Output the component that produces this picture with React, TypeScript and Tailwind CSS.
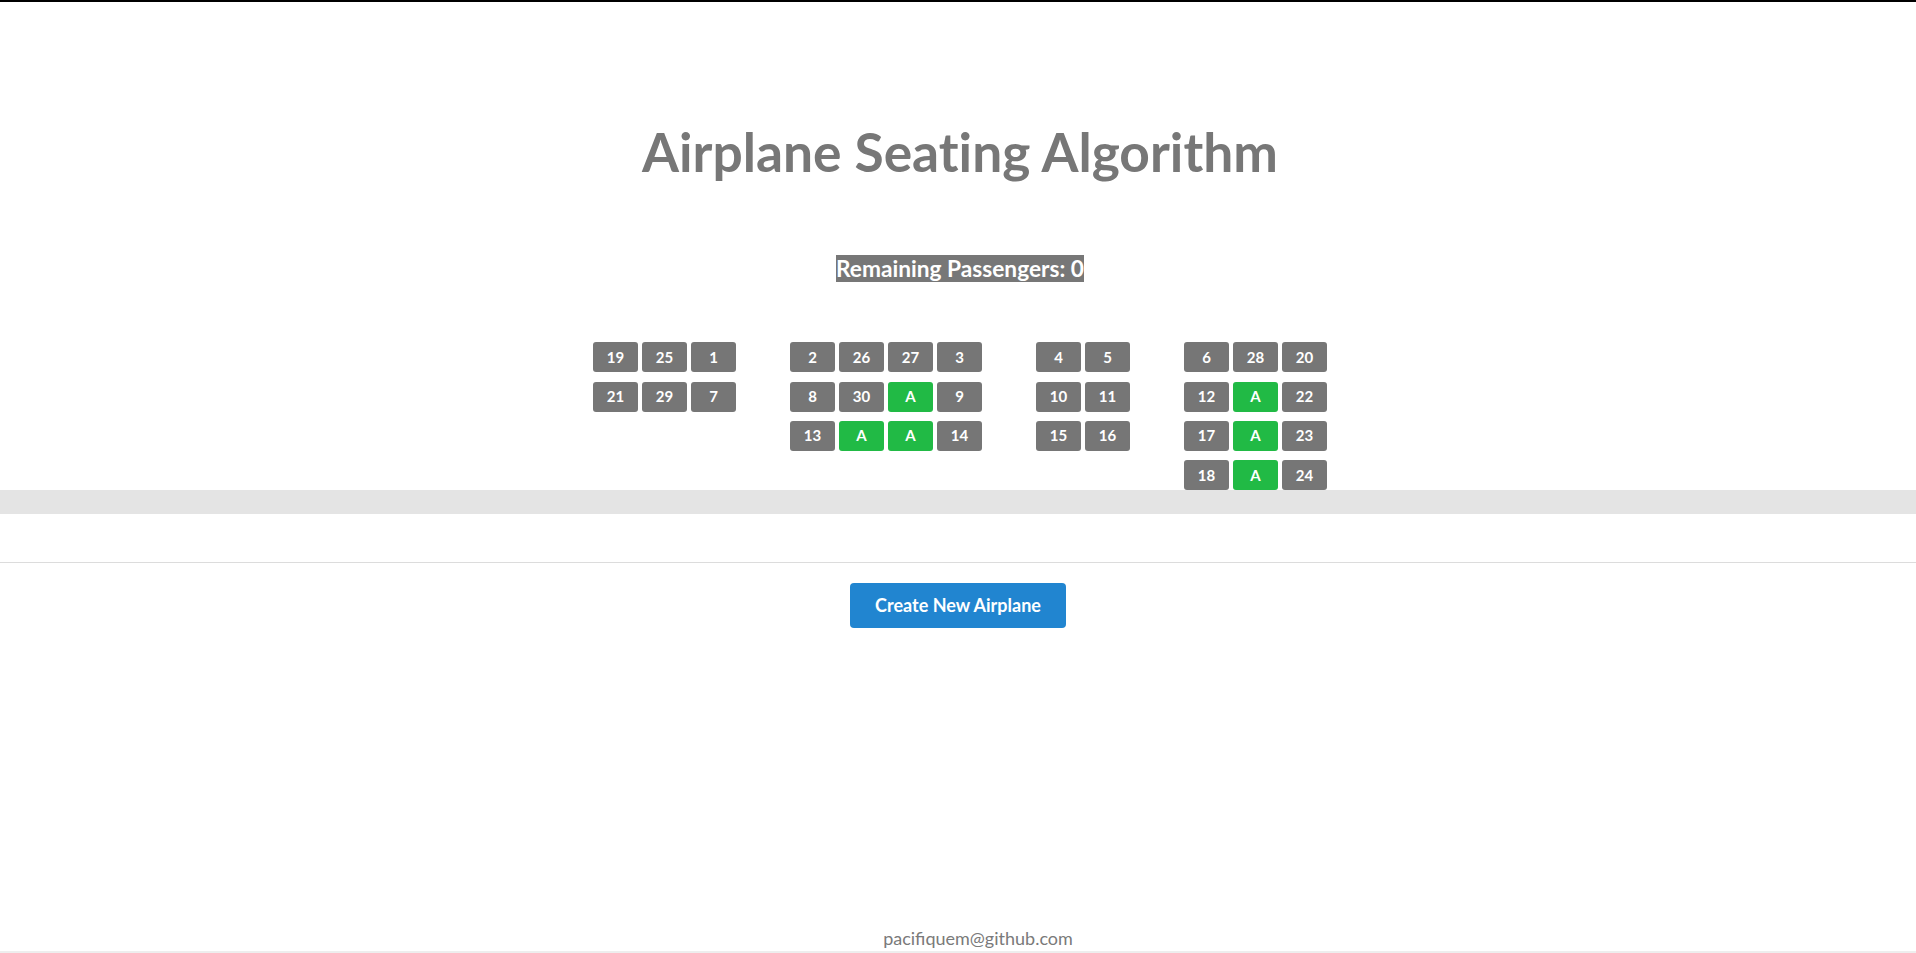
type Seat = number | "A";

const sections: Seat[][][] = [
  [
    [19, 25, 1],
    [21, 29, 7],
  ],
  [
    [2, 26, 27, 3],
    [8, 30, "A", 9],
    [13, "A", "A", 14],
  ],
  [
    [4, 5],
    [10, 11],
    [15, 16],
  ],
  [
    [6, 28, 20],
    [12, "A", 22],
    [17, "A", 23],
    [18, "A", 24],
  ],
];

function SeatBox({ value }: { value: Seat }) {
  const taken = value === "A";
  return (
    <div
      className={
        "flex h-[30px] w-[45px] items-center justify-center rounded-[3px] text-[15px] font-bold leading-none text-white " +
        (taken ? "bg-[#21ba45]" : "bg-[#767676]")
      }
    >
      {value}
    </div>
  );
}

function Section({ rows }: { rows: Seat[][] }) {
  return (
    <div className="flex flex-col gap-y-[9.33px]">
      {rows.map((row, i) => (
        <div key={i} className="flex gap-x-[4px]">
          {row.map((seat, j) => (
            <SeatBox key={j} value={seat} />
          ))}
        </div>
      ))}
    </div>
  );
}

export default function App() {
  return (
    <div className="flex min-h-screen flex-col border-t-2 border-black bg-white font-['Lato',_sans-serif]">
      <h1 className="pl-[4px] pt-[123px] text-center text-[53.3px] font-bold leading-none text-[#777777] [font-variant-ligatures:none]">
        Airplane Seating Algorithm
      </h1>

      <div className="mt-[77px] pl-[4px] text-center text-[22.7px] font-bold leading-[27px]">
        <span className="bg-[#777777] text-white">Remaining Passengers: 0</span>
      </div>

      <div className="mt-[60px] flex items-start justify-center gap-x-[54px] pl-[4px]">
        {sections.map((rows, i) => (
          <Section key={i} rows={rows} />
        ))}
      </div>

      <div className="h-[24px] bg-[#e4e4e4]" />

      <div className="mt-[48px] border-t border-[#dcdcdc]" />

      <div className="mt-[20px] flex justify-center">
        <button className="rounded-[4px] bg-[#2185d0] px-[25px] py-[14px] text-[18px] font-bold leading-[17px] text-white">
          Create New Airplane
        </button>
      </div>

      <footer className="mt-auto border-b-2 border-[#eeeeee] pb-[2px] pl-[40px] text-center text-[18px] leading-[22px] text-[#7a7a7a]">
        pacifiquem@github.com
      </footer>
    </div>
  );
}
